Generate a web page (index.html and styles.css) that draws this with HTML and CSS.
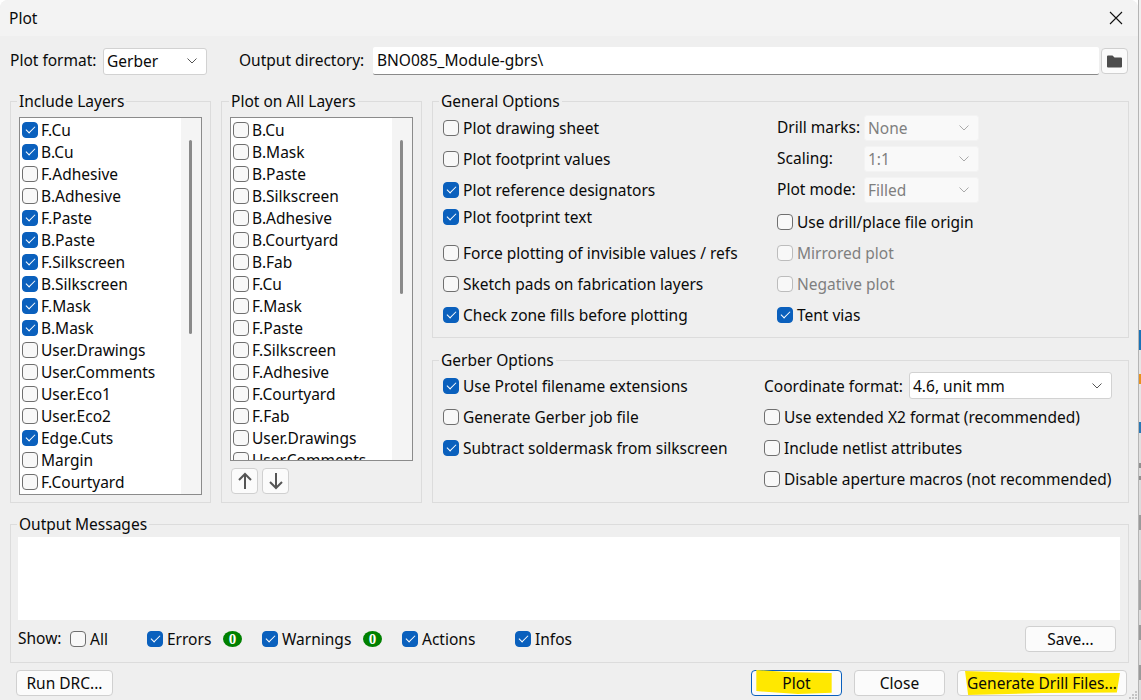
FILE: index.html
```html
<!DOCTYPE html>
<html lang="en">
<head>
    <meta charset="UTF-8">
    <title>Plot</title>
    <link rel="stylesheet" href="styles.css">
</head>

<body>
    <div class="window">
        <div class="titlebar">
            <span>Plot</span>
            <svg class="close" width="14" height="14" viewBox="0 0 14 14"><path d="M1 1L13 13M13 1L1 13" stroke="#111" stroke-width="1.1" fill="none"/></svg>
        </div>

        <div class="top-row">
            <span class="format-label">Plot format:</span>
            <div class="select format-select">Gerber<svg class="chev" width="10" height="6" viewBox="0 0 10 6"><path d="M.5 .5L5 5L9.500 .5" stroke="#555" fill="none"/></svg></div>
            <span class="dir-label">Output directory:</span>
            <div class="dir-input">BNO085_Module-gbrs\</div>
            <div class="btn folder-btn">
                <svg width="15" height="13" viewBox="0 0 15 13"><path d="M0 1.500Q0 .5 1 .5H5.500L7.500 2.500H14Q15 2.500 15 3.500V11.500Q15 12.500 14 12.500H1Q0 12.500 0 11.500Z" fill="#4d4d4d"/></svg>
            </div>
        </div>

        <div class="panels">
            <fieldset class="group layers">
                <legend>Include Layers</legend>
                <div class="list list-tall">
                    <div class="rows">
                        <label class="row"><input type="checkbox" checked>F.Cu</label>
                        <label class="row"><input type="checkbox" checked>B.Cu</label>
                        <label class="row"><input type="checkbox">F.Adhesive</label>
                        <label class="row"><input type="checkbox">B.Adhesive</label>
                        <label class="row"><input type="checkbox" checked>F.Paste</label>
                        <label class="row"><input type="checkbox" checked>B.Paste</label>
                        <label class="row"><input type="checkbox" checked>F.Silkscreen</label>
                        <label class="row"><input type="checkbox" checked>B.Silkscreen</label>
                        <label class="row"><input type="checkbox" checked>F.Mask</label>
                        <label class="row"><input type="checkbox" checked>B.Mask</label>
                        <label class="row"><input type="checkbox">User.Drawings</label>
                        <label class="row"><input type="checkbox">User.Comments</label>
                        <label class="row"><input type="checkbox">User.Eco1</label>
                        <label class="row"><input type="checkbox">User.Eco2</label>
                        <label class="row"><input type="checkbox" checked>Edge.Cuts</label>
                        <label class="row"><input type="checkbox">Margin</label>
                        <label class="row"><input type="checkbox">F.Courtyard</label>
                    </div>
                    <div class="scrollbar"><div class="thumb thumb-long"></div></div>
                </div>
            </fieldset>

            <fieldset class="group layers">
                <legend>Plot on All Layers</legend>
                <div class="list list-short">
                    <div class="rows">
                        <label class="row"><input type="checkbox">B.Cu</label>
                        <label class="row"><input type="checkbox">B.Mask</label>
                        <label class="row"><input type="checkbox">B.Paste</label>
                        <label class="row"><input type="checkbox">B.Silkscreen</label>
                        <label class="row"><input type="checkbox">B.Adhesive</label>
                        <label class="row"><input type="checkbox">B.Courtyard</label>
                        <label class="row"><input type="checkbox">B.Fab</label>
                        <label class="row"><input type="checkbox">F.Cu</label>
                        <label class="row"><input type="checkbox">F.Mask</label>
                        <label class="row"><input type="checkbox">F.Paste</label>
                        <label class="row"><input type="checkbox">F.Silkscreen</label>
                        <label class="row"><input type="checkbox">F.Adhesive</label>
                        <label class="row"><input type="checkbox">F.Courtyard</label>
                        <label class="row"><input type="checkbox">F.Fab</label>
                        <label class="row"><input type="checkbox">User.Drawings</label>
                        <label class="row"><input type="checkbox">User.Comments</label>
                    </div>
                    <div class="scrollbar"><div class="thumb thumb-short"></div></div>
                </div>
                <div class="arrows">
                    <div class="btn arrow-btn"><svg width="16" height="18" viewBox="0 0 16 18"><path d="M8 17V2M2 8L8 2L14 8" stroke="#555" stroke-width="2" fill="none"/></svg></div>
                    <div class="btn arrow-btn"><svg width="16" height="18" viewBox="0 0 16 18"><path d="M8 1V16M2 10L8 16L14 10" stroke="#555" stroke-width="2" fill="none"/></svg></div>
                </div>
            </fieldset>

            <div class="options">
                <fieldset class="group general">
                    <legend>General Options</legend>
                    <div class="columns">
                        <div class="col general-left">
                            <label class="row"><input type="checkbox">Plot drawing sheet</label>
                            <label class="row gap9"><input type="checkbox">Plot footprint values</label>
                            <label class="row gap9"><input type="checkbox" checked>Plot reference designators</label>
                            <label class="row gap5"><input type="checkbox" checked>Plot footprint text</label>
                            <label class="row gap14"><input type="checkbox">Force plotting of invisible values / refs</label>
                            <label class="row gap9"><input type="checkbox">Sketch pads on fabrication layers</label>
                            <label class="row gap9"><input type="checkbox" checked>Check zone fills before plotting</label>
                        </div>
                        <div class="col">
                            <div class="field"><span class="field-label">Drill marks:</span><div class="select off">None<svg class="chev" width="10" height="6" viewBox="0 0 10 6"><path d="M.5 .5L5 5L9.500 .5" stroke="#aaa" fill="none"/></svg></div></div>
                            <div class="field gap5"><span class="field-label">Scaling:</span><div class="select off">1:1<svg class="chev" width="10" height="6" viewBox="0 0 10 6"><path d="M.5 .5L5 5L9.500 .5" stroke="#aaa" fill="none"/></svg></div></div>
                            <div class="field gap5"><span class="field-label">Plot mode:</span><div class="select off">Filled<svg class="chev" width="10" height="6" viewBox="0 0 10 6"><path d="M.5 .5L5 5L9.500 .5" stroke="#aaa" fill="none"/></svg></div></div>
                            <label class="row gap8"><input type="checkbox">Use drill/place file origin</label>
                            <label class="row gap9 disabled"><input type="checkbox" disabled>Mirrored plot</label>
                            <label class="row gap9 disabled"><input type="checkbox" disabled>Negative plot</label>
                            <label class="row gap9"><input type="checkbox" checked>Tent vias</label>
                        </div>
                    </div>
                </fieldset>

                <fieldset class="group gerber">
                    <legend>Gerber Options</legend>
                    <div class="columns">
                        <div class="col gerber-left">
                            <label class="row"><input type="checkbox" checked>Use Protel filename extensions</label>
                            <label class="row gap9"><input type="checkbox">Generate Gerber job file</label>
                            <label class="row gap9"><input type="checkbox" checked>Subtract soldermask from silkscreen</label>
                        </div>
                        <div class="col">
                            <div class="field"><span class="coord-label">Coordinate format:</span><div class="select coord-select">4.6, unit mm<svg class="chev" width="10" height="6" viewBox="0 0 10 6"><path d="M.5 .5L5 5L9.500 .5" stroke="#555" fill="none"/></svg></div></div>
                            <label class="row gap7"><input type="checkbox">Use extended X2 format (recommended)</label>
                            <label class="row gap9"><input type="checkbox">Include netlist attributes</label>
                            <label class="row gap9"><input type="checkbox">Disable aperture macros (not recommended)</label>
                        </div>
                    </div>
                </fieldset>
            </div>
        </div>

        <fieldset class="group output">
            <legend>Output Messages</legend>
            <div class="messages"></div>
            <div class="show-row">
                <span class="show-label">Show:</span>
                <label class="row"><input type="checkbox">All</label>
                <label class="row"><input type="checkbox" checked>Errors</label>
                <span class="badge">0</span>
                <label class="row"><input type="checkbox" checked>Warnings</label>
                <span class="badge">0</span>
                <label class="row"><input type="checkbox" checked>Actions</label>
                <label class="row"><input type="checkbox" checked>Infos</label>
                <div class="btn save-btn">Save...</div>
            </div>
        </fieldset>

        <div class="footer">
            <div class="btn drc-btn">Run DRC...</div>
            <div class="footer-right">
                <div class="btn act-btn default-btn"><span class="mark mark-plot">Plot</span></div>
                <div class="btn act-btn">Close</div>
                <div class="btn drill-btn"><span class="mark mark-drill">Generate Drill Files...</span></div>
            </div>
        </div>

        <svg class="grip" width="10" height="10" viewBox="0 0 10 10" fill="#c4c4c4">
            <rect x="7" y="1" width="2" height="2"/>
            <rect x="4" y="4" width="2" height="2"/><rect x="7" y="4" width="2" height="2"/>
            <rect x="1" y="7" width="2" height="2"/><rect x="4" y="7" width="2" height="2"/><rect x="7" y="7" width="2" height="2"/>
        </svg>
    </div>
    <div class="desktop"></div>
</body>

</html>
```

FILE: styles.css
```css
* {
    box-sizing: border-box;
}

body {
    margin: 0;
    width: 1141px;
    height: 700px;
    display: flex;
    overflow: hidden;
    background-color: #fff;
    font-family: "Noto Sans", "Liberation Sans", sans-serif;
    font-size: 15.5px;
    color: #0a0a0a;
}

.window {
    position: relative;
    width: 1138px;
    height: 700px;
    flex: none;
    background-color: #efefef;
    border-radius: 8px 8px 0 0;
    overflow: hidden;
}

/* strip of the desktop behind the dialog */
.desktop {
    flex: none;
    width: 3px;
    background: linear-gradient(#f0f0f0 0 330px, #1a73b8 330px 350px, #e6e6e6 350px 374px, #e8921e 374px 384px, #e6e6e6 384px 422px, #2a78b5 422px 433px, #e0e0e0 433px 463px, #8f8f8f 463px 468px, #dcdcdc 468px 476px, #8f8f8f 476px 480px, #dcdcdc 480px 515px, #9a9a9a 515px 530px, #dcdcdc 530px 580px, #a5a5a5 580px 610px, #dcdcdc 610px 625px, #9a9a9a 625px 640px, #dcdcdc 640px 665px, #9a9a9a 665px 680px, #dcdcdc 680px);
    border-left: 1px solid #b5b5b5;
}

/* 标题栏 */
.titlebar {
    height: 36px;
    display: flex;
    align-items: center;
    justify-content: space-between;
    padding: 0 15px 0 9px;
    background-color: #f3f3f3;
}

.top-row {
    display: flex;
    align-items: center;
    height: 28px;
    margin-top: 11px;
    padding-left: 10px;
}

.format-label {
    width: 93px;
    padding-bottom: 2px;
}

.format-select {
    width: 104px;
    height: 27px;
}

.dir-label {
    width: 134px;
    margin-left: 32px;
    padding-bottom: 2px;
}

.dir-input {
    width: 726px;
    height: 28px;
    line-height: 26px;
    padding-left: 4px;
    background-color: #fff;
    border-bottom: 1px solid #8a8a8a;
    border-radius: 2px;
}

.folder-btn {
    width: 27px;
    height: 26px;
    margin-left: 2px;
}

.panels {
    display: flex;
    gap: 10px;
    height: 412px;
    margin: 16px 0 0 10px;
}

/* 分组框 */
.group {
    margin: 0;
    padding: 6px 8px 7px;
    min-width: 0;
    border: 1px solid #dcdcdc;
}

.group legend {
    height: 20px;
    line-height: 20px;
    padding: 0 2px;
}

.layers legend {
    margin-left: -1px;
}

.layers:first-child legend {
    margin-left: -2px;
}

.general legend,
.gerber legend {
    margin-left: -4px;
}

.output legend {
    margin-left: -1px;
}

.layers {
    width: 201px;
}

.list {
    display: flex;
    width: 183px;
    border: 1px solid #8b8b8b;
    overflow: hidden;
}

.list-tall {
    height: 378px;
}

.list-short {
    height: 344px;
}

.rows {
    flex: 1;
    padding: 1px 0 0 2px;
    background-color: #fff;
    overflow: hidden;
}

.scrollbar {
    flex: none;
    width: 20px;
    padding: 22px 0 0 8px;
    background-color: #f4f4f4;
}

.thumb {
    width: 3px;
    border-radius: 2px;
    background-color: #8a8a8a;
}

.thumb-long {
    height: 194px;
}

.thumb-short {
    height: 154px;
}

.row {
    display: flex;
    align-items: center;
    height: 22px;
    white-space: nowrap;
}

.row input {
    appearance: none;
    position: relative;
    flex: none;
    width: 16px;
    height: 16px;
    margin: 0 4px 0 0;
    background-color: #f8f8f8;
    border: 1px solid #6f6f6f;
    border-radius: 4px;
}

.rows .row input {
    margin-right: 3px;
}

.row input:checked {
    background-color: #0a60bd;
    border-color: #0a60bd;
}

.row input:checked::after {
    content: "";
    position: absolute;
    left: 3px;
    top: 3px;
    width: 8px;
    height: 4px;
    border-left: 1px solid #fff;
    border-bottom: 1px solid #fff;
    transform: rotate(-45deg);
}

.row input:disabled {
    border-color: #bcbcbc;
}

.disabled {
    color: #7f7f7f;
}

.gap5 { margin-top: 5px; }
.gap7 { margin-top: 7px; }
.gap8 { margin-top: 8px; }
.gap9 { margin-top: 9px; }
.gap14 { margin-top: 14px; }

.arrows {
    display: flex;
    gap: 4px;
    margin: 7px 0 0 1px;
}

.arrow-btn {
    width: 27px;
    height: 26px;
}

/* 右侧选项 */
.options {
    width: 697px;
    display: flex;
    flex-direction: column;
    gap: 12px;
}

.general {
    height: 247px;
    padding: 4px 10px 0;
}

.gerber {
    flex: 1;
    padding: 2px 10px 0;
}

.columns {
    display: flex;
}

.general-left {
    width: 334px;
    padding-top: 2px;
}

.gerber-left {
    width: 321px;
    padding-top: 3px;
}

.field {
    display: flex;
    align-items: center;
}

.field-label {
    width: 87px;
    padding-bottom: 2px;
}

.coord-label {
    width: 145px;
}

.select {
    display: flex;
    align-items: center;
    justify-content: space-between;
    padding: 0 9px 0 3px;
    background-color: #fff;
    border: 1px solid #d2d2d2;
    border-radius: 3px;
}

.select.off {
    width: 115px;
    height: 26px;
    color: #7f7f7f;
    background-color: #f9f9f9;
    border-color: #f3f3f3;
}

.coord-select {
    width: 203px;
    height: 27px;
}

/* 按钮 */
.btn {
    display: flex;
    align-items: center;
    justify-content: center;
    background-color: #fbfbfb;
    border: 1px solid #d0d0d0;
    border-radius: 4px;
}

.output {
    width: 1119px;
    height: 149px;
    margin: 11px 0 0 10px;
    padding: 3px 7px 0;
}

.messages {
    width: 1102px;
    height: 83px;
    background-color: #fff;
}

.show-row {
    display: grid;
    grid-template-columns: 52px 77px 76px 39px 101px 39px 113px 510px 91px;
    align-items: center;
    height: 38px;
}

.show-label {
    padding-bottom: 2px;
}

.badge {
    width: 19px;
    height: 16px;
    line-height: 16px;
    text-align: center;
    font-family: "Liberation Serif", serif;
    font-size: 15px;
    font-weight: bold;
    color: #fff;
    background-color: #008000;
    border-radius: 50%;
}

.save-btn {
    height: 26px;
}

.footer {
    display: flex;
    justify-content: space-between;
    margin-top: 7px;
    padding: 0 11px 0 16px;
}

.footer .btn {
    height: 26px;
}

.footer-right {
    display: flex;
    gap: 12px;
}

.drc-btn {
    width: 97px;
}

.act-btn {
    width: 91px;
}

.default-btn {
    border-color: #0a60bd;
}

.drill-btn {
    width: 170px;
}

/* 手绘的黄色高亮 */
.mark {
    position: relative;
    z-index: 0;
}

.mark::before {
    content: "";
    position: absolute;
    z-index: -1;
    background-color: #ffe800;
}

.mark-plot::before {
    left: -26px;
    right: -21px;
    top: -2px;
    bottom: 0;
    clip-path: polygon(0 0, 40% 8%, 100% 12%, 100% 95%, 55% 100%, 0 88%);
}

.mark-drill::before {
    left: -2px;
    right: -3px;
    top: -1px;
    bottom: -1px;
    clip-path: polygon(0 0, 50% 10%, 100% 8%, 98% 90%, 50% 92%, 2% 100%);
}

.grip {
    position: absolute;
    right: 0;
    bottom: 0;
}
```
